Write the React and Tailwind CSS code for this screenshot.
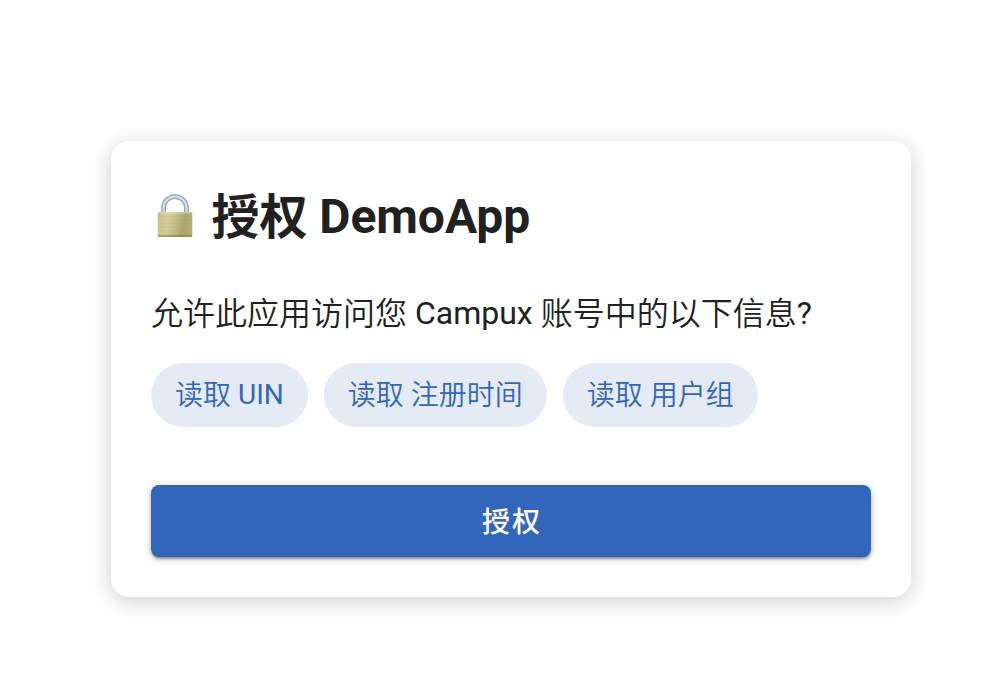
const scopes = [
  { verb: "读取", latin: "UIN" },
  { verb: "读取", han: "注册时间" },
  { verb: "读取", han: "用户组" },
];

function Lock() {
  return (
    <svg className="h-12 w-12 shrink-0" viewBox="0 0 48 48" aria-hidden="true">
      <defs>
        <linearGradient id="brass" x1="0" x2="1" y1="0" y2="0.15">
          <stop offset="0" stopColor="#b9b67d" />
          <stop offset="0.1" stopColor="#c9c68f" />
          <stop offset="0.35" stopColor="#d0cd97" />
          <stop offset="0.6" stopColor="#bfbb80" />
          <stop offset="0.8" stopColor="#aca76e" />
          <stop offset="1" stopColor="#b3ae76" />
        </linearGradient>
        <linearGradient id="sheen" x1="0" x2="0" y1="0" y2="1">
          <stop offset="0" stopColor="#fff" stopOpacity="0.35" />
          <stop offset="0.12" stopColor="#fff" stopOpacity="0" />
          <stop offset="0.9" stopColor="#5f5a25" stopOpacity="0" />
          <stop offset="1" stopColor="#5f5a25" stopOpacity="0.65" />
        </linearGradient>
      </defs>
      <g fill="none">
        <path d="M12.6 20V14.4a11.4 10.8 0 0 1 22.8 0V20" stroke="#8a8f98" strokeWidth="4.6" />
        <path d="M12.6 20V14.4a11.4 10.8 0 0 1 22.8 0V20" stroke="#aab8ce" strokeWidth="3.6" />
        <path d="M12.6 20V14.4a11.4 10.8 0 0 1 22.8 0V20" stroke="#d6e2f2" strokeWidth="1.7" />
      </g>
      <rect x="6.8" y="19" width="34.5" height="24.7" rx="0.8" fill="url(#brass)" />
      <path d="M7 23.5h34M7 27h34M7 30.5h34M7 34h34M7 37.5h34" stroke="#8c874b" strokeOpacity="0.1" strokeWidth="0.8" />
      <rect x="6.8" y="19" width="34.5" height="24.7" rx="0.8" fill="url(#sheen)" />
    </svg>
  );
}

function Han({ children }) {
  return <span className="align-[-1px] leading-none">{children}</span>;
}

export default function App() {
  return (
    <main className="flex h-[694px] w-[996px] items-start bg-white pt-[141px] pl-[111px] font-['Roboto','Noto_Sans_CJK_SC',sans-serif] text-[#212121]">
      <section className="flex h-[456px] w-[800px] flex-col rounded-[18px] bg-white px-10 pt-10 shadow-[0_4px_20px_rgba(0,0,0,0.2)]">
        <h1 className="flex h-[72px] items-center text-[48px] font-bold whitespace-pre">
          <Lock />
          <span className="ml-[12.5px] tracking-[-0.05px]"><Han>授权</Han> DemoApp</span>
        </h1>
        <p className="mt-[36px] h-12 font-['Roboto','Noto_Sans_CJK_SC_DemiLight','Noto_Sans_CJK_SC',sans-serif] text-[32px] leading-[48px] whitespace-nowrap">
          <Han>允许此应用访问您</Han> Campux <Han>账号中的以下信息</Han>?
        </p>
        <ul className="mt-[26px] flex gap-4 font-['Roboto','Noto_Sans_CJK_SC_DemiLight','Noto_Sans_CJK_SC',sans-serif]">
          {scopes.map(({ verb, latin, han }) => (
            <li key={latin ?? han} className="flex h-16 items-center rounded-full bg-[#e5ebf5] px-6 text-[28px] whitespace-nowrap text-[#3266bb]">
              <span>
                <Han>{verb}</Han> {latin ?? <Han>{han}</Han>}
              </span>
            </li>
          ))}
        </ul>
        <button className="mt-[58px] h-[72px] rounded-lg bg-[#3266bb] pt-[3px] pl-0.5 text-[28px] font-medium tracking-[2px] text-white shadow-[0_3px_3px_-2px_rgba(0,0,0,0.4),0_2px_4px_rgba(0,0,0,0.22),0_2px_10px_rgba(0,0,0,0.12)]">
          授权
        </button>
      </section>
    </main>
  );
}
